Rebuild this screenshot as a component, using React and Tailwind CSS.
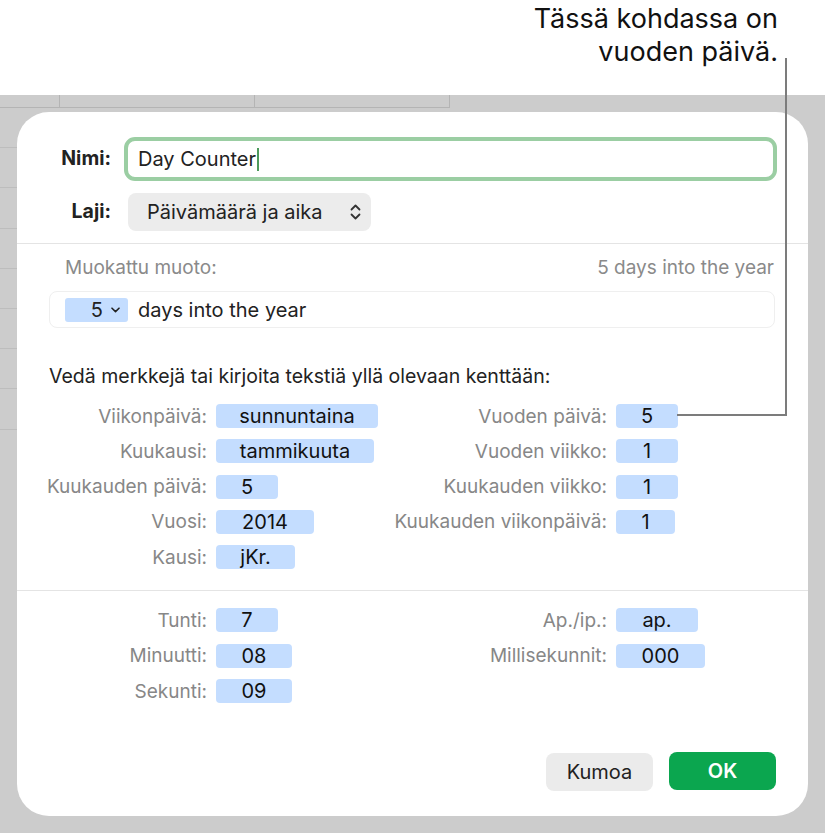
import React from "react";

const Token = ({ children, w }) => (
  <span
    className="flex h-[24px] items-center justify-center rounded-[4px] bg-[#c4ddff] text-[20px] leading-none text-[#111]"
    style={{ width: w }}
  >
    {children}
  </span>
);

const FieldRow = ({ label, value, w }) => (
  <div className="flex h-[24px] items-center">
    <div className="flex w-[190px] shrink-0 justify-end">
      <span className="whitespace-nowrap text-[19px] leading-none text-[#878787]">{label}</span>
    </div>
    <span className="ml-[9px]">
      <Token w={w}>{value}</Token>
    </span>
  </div>
);

const UpDown = () => (
  <svg width="11" height="18" viewBox="0 0 11 18" fill="none" stroke="#333" strokeWidth="1.8" strokeLinecap="round" strokeLinejoin="round">
    <path d="M1.5 6.5 L5.5 2.5 L9.5 6.5" />
    <path d="M1.5 11.5 L5.5 15.5 L9.5 11.5" />
  </svg>
);

const ChevronDown = () => (
  <svg width="9" height="6" viewBox="0 0 9 6" fill="none" stroke="#222" strokeWidth="1.6" strokeLinecap="round" strokeLinejoin="round">
    <path d="M1 1.2 L4.5 4.6 L8 1.2" />
  </svg>
);

const dateLeft = [
  ["Viikonpäivä:", "sunnuntaina", 162],
  ["Kuukausi:", "tammikuuta", 158],
  ["Kuukauden päivä:", "5", 62],
  ["Vuosi:", "2014", 98],
  ["Kausi:", "jKr.", 79],
];

const dateRight = [
  ["Vuoden päivä:", "5", 62],
  ["Vuoden viikko:", "1", 62],
  ["Kuukauden viikko:", "1", 62],
  ["Kuukauden viikonpäivä:", "1", 59],
];

const timeLeft = [
  ["Tunti:", "7", 62],
  ["Minuutti:", "08", 76],
  ["Sekunti:", "09", 76],
];

const timeRight = [
  ["Ap./ip.:", "ap.", 82],
  ["Millisekunnit:", "000", 89],
];

export default function App() {
  return (
    <div
      className="relative h-[833px] w-[825px] overflow-hidden bg-white"
      style={{ fontFamily: 'Inter, "Noto Sans", sans-serif' }}
    >
      <div className="flex h-[95px] flex-col items-end pr-[47px] pt-[2px] text-[27px] leading-[33px] text-[#111]">
        <span>Tässä kohdassa on</span>
        <span>vuoden päivä.</span>
      </div>

      <div className="h-[738px] bg-[#cccccc]">
        <div className="flex h-[13px]">
          <div className="w-[60px] border-b border-r border-[#b4b4b4]" />
          <div className="w-[195px] border-b border-r border-[#b4b4b4]" />
          <div className="w-[195px] border-b border-r border-[#b4b4b4]" />
        </div>

        <div className="flex">
          <div className="flex w-[17px] flex-col">
            {Array.from({ length: 8 }).map((_, i) => (
              <div key={i} className="h-[40.2px] border-b border-[#bdbdbd]" />
            ))}
          </div>

          <div className="mt-[4px] flex h-[704px] w-[791px] flex-col rounded-[32px] bg-white pt-[25px] text-[#222]">
            <div className="flex items-center">
              <span className="w-[94px] text-right text-[19.5px] font-bold">Nimi:</span>
              <div className="ml-[13px] flex h-[44px] w-[653px] items-center rounded-[11px] border-[4px] border-[#9bcea3] pl-[10px] text-[20px]">
                <span>Day Counter</span>
                <span className="ml-[1px] h-[23px] w-[2px] bg-[#4d9a5c]" />
              </div>
            </div>

            <div className="mt-[12px] flex items-center">
              <span className="w-[94px] text-right text-[19.5px] font-bold">Laji:</span>
              <div className="ml-[17px] flex h-[38px] w-[243px] items-center justify-between rounded-[8px] bg-[#ececec] pl-[19px] pr-[10px] text-[20px]">
                <span>Päivämäärä ja aika</span>
                <UpDown />
              </div>
            </div>

            <div className="mt-[12px] h-px bg-[#e4e4e4]" />

            <div className="mt-[13px] flex items-center justify-between pl-[48px] pr-[34px] text-[19px] leading-[22px] text-[#8a8a8a]">
              <span>Muokattu muoto:</span>
              <span>5 days into the year</span>
            </div>

            <div className="ml-[32px] mt-[12px] flex h-[37px] w-[726px] items-center rounded-[8px] border border-[#efefef] pl-[15px]">
              <span className="flex h-[24px] w-[63px] items-center justify-end gap-[8px] rounded-[3px] bg-[#c4ddff] pr-[8px] text-[20px]">
                <span>5</span>
                <ChevronDown />
              </span>
              <span className="ml-[10px] text-[20px]">days into the year</span>
            </div>

            <p className="mt-[37px] pl-[32px] text-[19.5px] leading-[22px] text-[#222]">
              Vedä merkkejä tai kirjoita tekstiä yllä olevaan kenttään:
            </p>

            <div className="mt-[17px] flex">
              <div className="flex w-[400px] flex-col gap-[11.25px]">
                {dateLeft.map(([l, v, w]) => (
                  <FieldRow key={l} label={l} value={v} w={w} />
                ))}
              </div>
              <div className="flex flex-col gap-[11.25px]">
                {dateRight.map(([l, v, w]) => (
                  <FieldRow key={l} label={l} value={v} w={w} />
                ))}
              </div>
            </div>

            <div className="mt-[21px] h-px bg-[#e4e4e4]" />

            <div className="mt-[17px] flex">
              <div className="flex w-[400px] flex-col gap-[11.5px]">
                {timeLeft.map(([l, v, w]) => (
                  <FieldRow key={l} label={l} value={v} w={w} />
                ))}
              </div>
              <div className="flex flex-col gap-[11.5px]">
                {timeRight.map(([l, v, w]) => (
                  <FieldRow key={l} label={l} value={v} w={w} />
                ))}
              </div>
            </div>

            <div className="mt-auto mb-[25px] flex items-center justify-end gap-[16px] pr-[32px]">
              <button className="mt-[3px] h-[38px] w-[107px] rounded-[8px] bg-[#ebebeb] text-[20px] text-[#222]">
                Kumoa
              </button>
              <button className="h-[38px] w-[107px] rounded-[8px] bg-[#0ba64f] text-[20px] font-semibold text-white">
                OK
              </button>
            </div>
          </div>
        </div>
      </div>

      <div className="absolute left-[785px] top-[58px] h-[357px] w-[2px] bg-[#7c7c7c]" />
      <div className="absolute left-[677px] top-[414px] h-[2px] w-[110px] bg-[#7c7c7c]" />
    </div>
  );
}
